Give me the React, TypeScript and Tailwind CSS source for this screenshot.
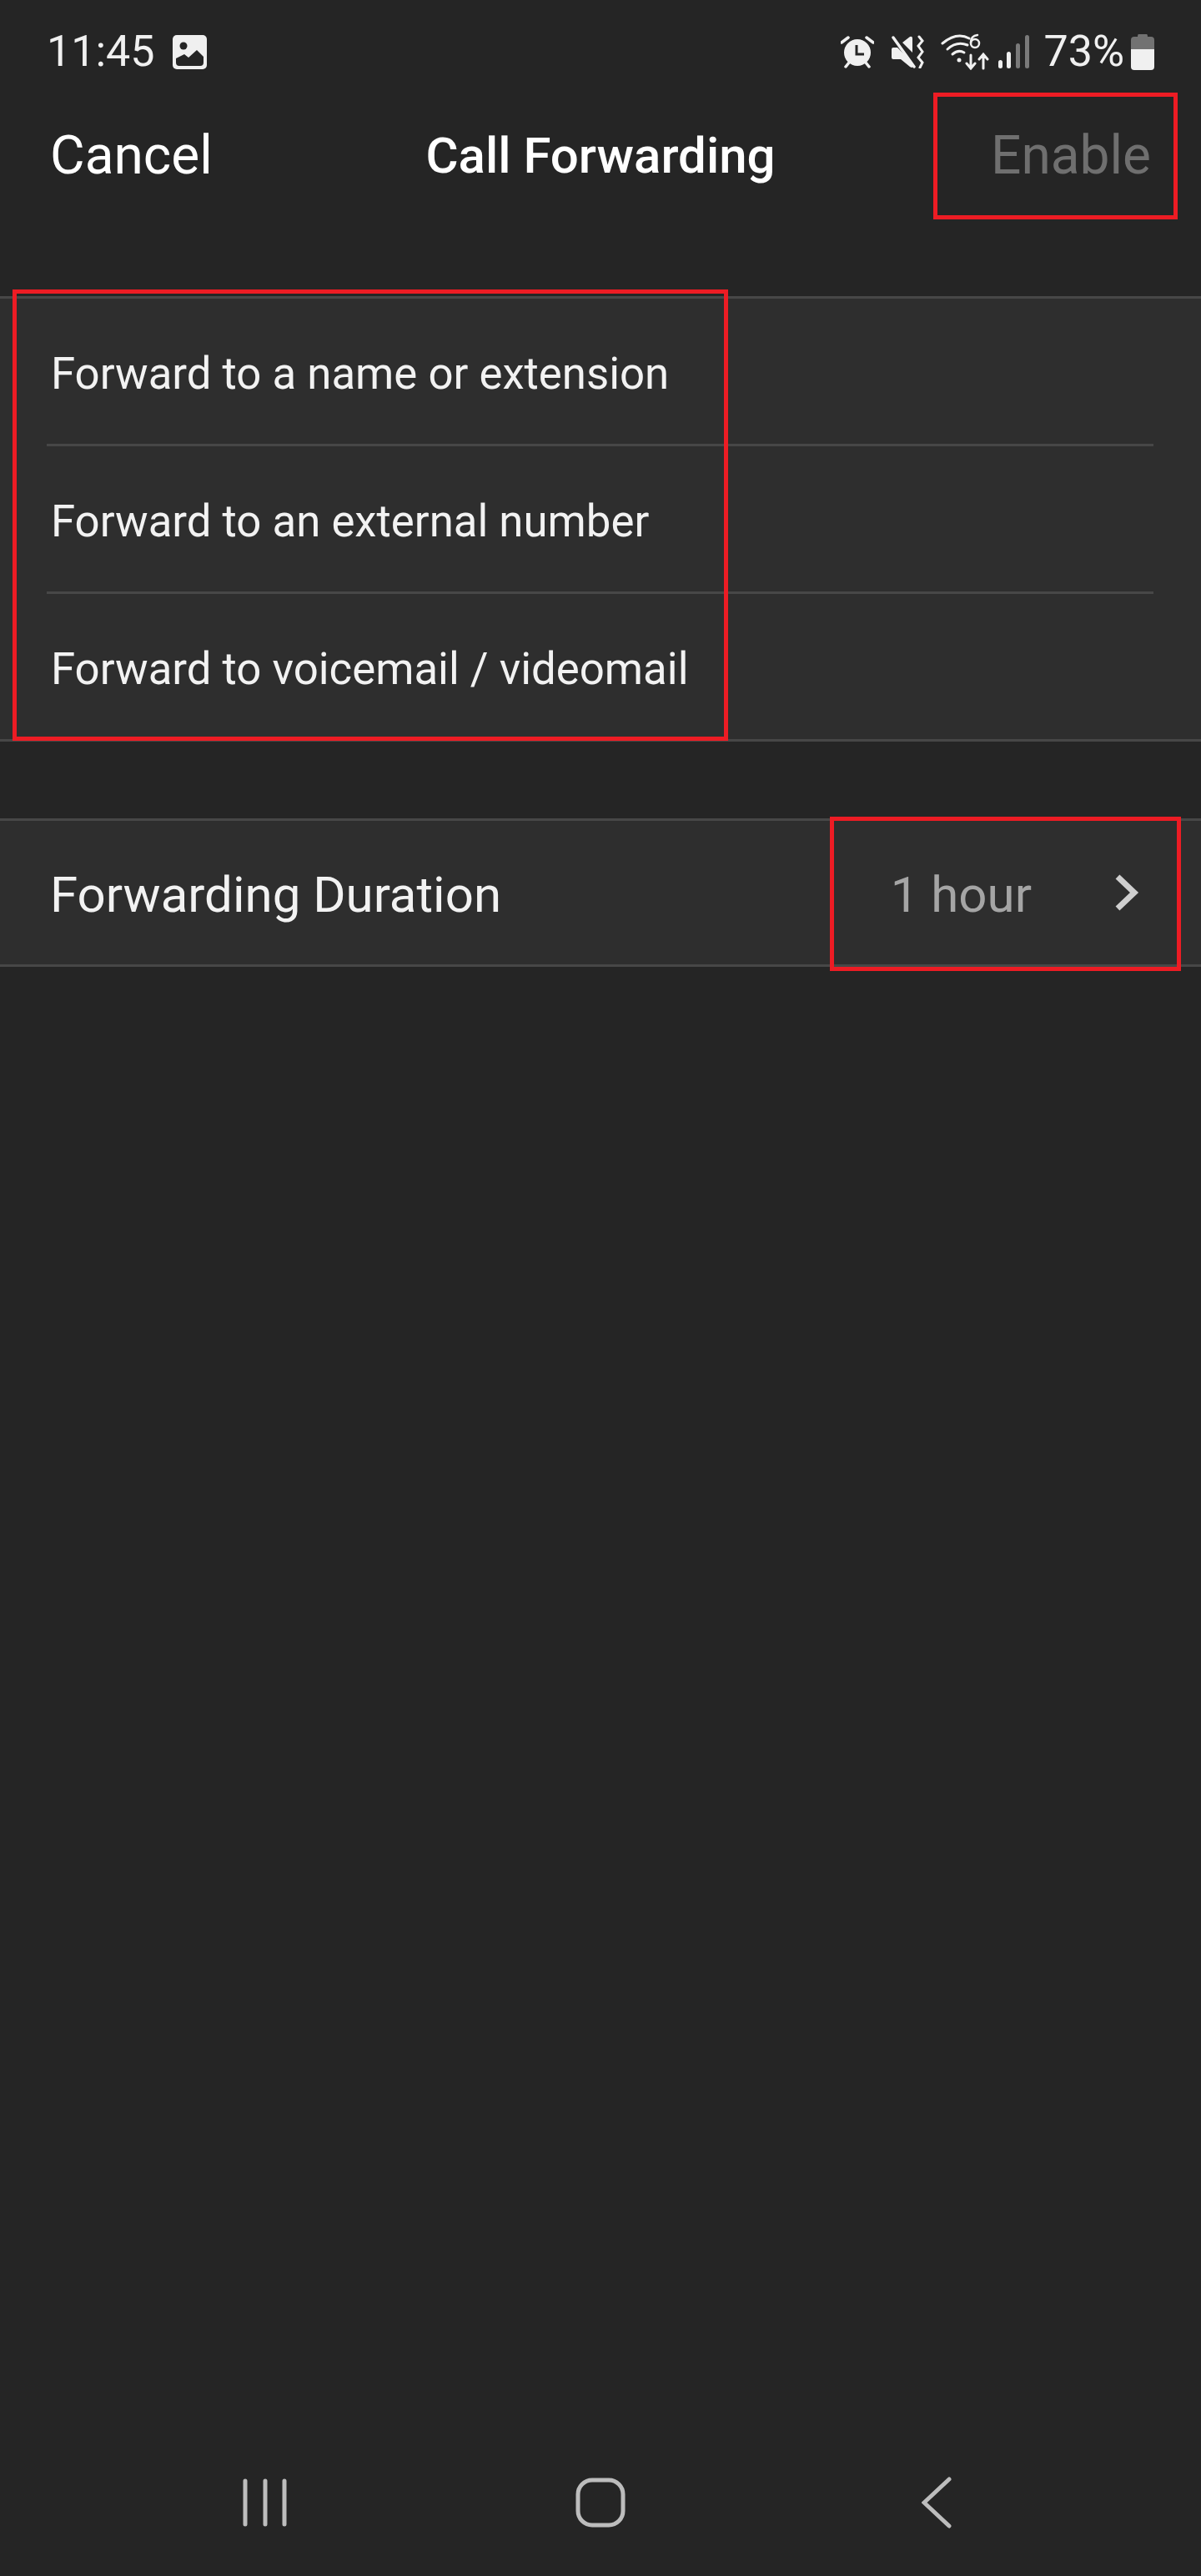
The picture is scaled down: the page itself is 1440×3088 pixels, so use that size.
const font = { fontFamily: "Roboto, sans-serif" };

function ImageIcon() {
  return (
    <svg width="41" height="41" viewBox="0 0 41 41" className="ml-[21px]">
      <rect width="41" height="41" rx="5" fill="#f0f0f0" />
      <circle cx="13" cy="13" r="4.5" fill="#252525" />
      <path
        d="M4 33 V28 L14 23 L19 27 L29 18 L37 26 V33 Q37 37 33 37 H8 Q4 37 4 33 Z"
        fill="#252525"
      />
    </svg>
  );
}

function AlarmIcon() {
  return (
    <svg width="40" height="40" viewBox="0 0 40 40">
      <circle cx="20" cy="21" r="16" fill="#f0f0f0" />
      <path d="M1 9 L9 3 M39 9 L31 3 M6 38 L10 33 M34 38 L30 33" stroke="#f0f0f0" strokeWidth="3.5" strokeLinecap="round" />
      <path d="M19 12 V23 H28" stroke="#252525" strokeWidth="3" fill="none" />
    </svg>
  );
}

function MuteIcon() {
  return (
    <svg width="40" height="40" viewBox="0 0 40 40">
      <path d="M1 17 Q1 15 3 15 H8 L26 33 V38 Q26 40 23 38 L12 29 H3 Q1 29 1 27 Z" fill="#f0f0f0" />
      <path d="M14 9 L23 2 Q26 1 26 4 V21 Z" fill="#f0f0f0" />
      <path d="M3 3 L28 38" stroke="#f0f0f0" strokeWidth="3.5" strokeLinecap="round" />
      <path d="M34 2 L38 7 L33 13 L38 20 L33 27 L38 33 L35 39" stroke="#f0f0f0" strokeWidth="3" fill="none" strokeLinecap="round" />
    </svg>
  );
}

function WifiIcon() {
  return (
    <svg width="58" height="44" viewBox="0 0 58 44" fill="none" stroke="#f0f0f0" strokeLinecap="round">
      <path d="M2 12 Q19 -2 34 6" strokeWidth="3" />
      <path d="M8 19 Q19 9 32 14" strokeWidth="3" />
      <path d="M14 25 Q21 19 28 23" strokeWidth="3" />
      <circle cx="22" cy="32" r="2.5" fill="#f0f0f0" stroke="none" />
      <circle cx="41" cy="12" r="5" strokeWidth="2.5" />
      <path d="M36 11 Q36 3 44 2" strokeWidth="2.5" />
      <path d="M36 26 V41 M31 36 L36 42 L41 36 M51 42 V26 M46 31 L51 25 L56 31" strokeWidth="3" />
    </svg>
  );
}

function SignalIcon() {
  return (
    <svg width="37" height="40" viewBox="0 0 37 40">
      <rect x="0" y="30" width="5" height="10" rx="2.5" fill="#f0f0f0" />
      <rect x="10" y="20" width="5" height="20" rx="2.5" fill="#f0f0f0" />
      <rect x="21" y="10" width="5" height="30" rx="2.5" fill="#7a7a7a" />
      <rect x="32" y="0" width="5" height="40" rx="2.5" fill="#7a7a7a" />
    </svg>
  );
}

function BatteryIcon() {
  return (
    <svg width="28" height="43" viewBox="0 0 28 43" className="ml-[8px]">
      <path d="M9 0 H19 Q20 0 20 3 H24 Q28 3 28 7 V18 H0 V7 Q0 3 4 3 H8 Q8 0 9 0 Z" fill="#727272" />
      <path d="M0 18 H28 V39 Q28 43 24 43 H4 Q0 43 0 39 Z" fill="#f0f0f0" />
    </svg>
  );
}

function StatusBar() {
  return (
    <div className="flex h-[124px] items-center pl-[56px] pr-[56px] text-[#f0f0f0]">
      <span className="text-[52px] leading-none">11:45</span>
      <ImageIcon />
      <div className="ml-auto flex items-center">
        <AlarmIcon />
        <div className="ml-[20px]"><MuteIcon /></div>
        <div className="ml-[20px]"><WifiIcon /></div>
        <div className="ml-[11px]"><SignalIcon /></div>
        <span className="ml-[17px] text-[52px] leading-none">73%</span>
        <BatteryIcon />
      </div>
    </div>
  );
}

function Row({ label }: { label: string }) {
  return (
    <div className="flex h-[174px] items-center pl-[61px] pt-[7px] text-[52.75px] leading-none text-[#f2f2f2]">
      {label}
    </div>
  );
}

export default function App() {
  return (
    <div className="relative flex h-[3088px] w-[1440px] flex-col overflow-hidden bg-[#252525]" style={font}>
      <StatusBar />

      <div className="grid h-[123px] grid-cols-[1fr_auto_1fr] items-center px-[60px] pt-[2px] text-[64px] leading-none">
        <span className="text-white">Cancel</span>
        <span className="text-[60px] font-medium text-white">Call Forwarding</span>
        <span className="text-right text-[#6f6f6f]">Enable</span>
      </div>

      <div className="mt-[108px] border-y-[3px] border-[#474747] bg-[#2e2e2e]">
        <Row label="Forward to a name or extension" />
        <div className="ml-[56px] mr-[57px] h-[3px] bg-[#474747]" />
        <Row label="Forward to an external number" />
        <div className="ml-[56px] mr-[57px] h-[3px] bg-[#474747]" />
        <Row label="Forward to voicemail / videomail" />
      </div>

      <div className="mt-[92px] flex h-[178px] items-center border-y-[3px] border-[#474747] bg-[#2e2e2e] pl-[60px] pr-[74px] text-[60px] leading-none">
        <span className="mt-[5px] text-[#f2f2f2]">Forwarding Duration</span>
        <span className="ml-auto mt-[5px] text-[#a5a5a5]">1 hour</span>
        <svg width="30" height="46" viewBox="0 0 30 46" className="ml-[99px]">
          <path d="M4 4 L24 23 L4 42" fill="none" stroke="#cfcfcf" strokeWidth="7" />
        </svg>
      </div>

      <div className="mt-auto flex h-[176px] items-center pl-[291px]">
        <svg width="53" height="58" viewBox="0 0 53 58" stroke="#bdbdbd" strokeWidth="5" strokeLinecap="round">
          <path d="M3 3 V55 M27 3 V55 M50 3 V55" />
        </svg>
        <svg width="60" height="60" viewBox="0 0 60 60" className="ml-[346px]">
          <rect x="3" y="3" width="54" height="54" rx="17" fill="none" stroke="#bdbdbd" strokeWidth="5" />
        </svg>
        <svg width="36" height="62" viewBox="0 0 36 62" className="ml-[355px]">
          <path d="M33 3 L3 31 L33 59" fill="none" stroke="#bdbdbd" strokeWidth="5" strokeLinecap="round" />
        </svg>
      </div>

      {/* red annotation boxes on top of the screenshot */}
      <div className="absolute left-[1119px] top-[111px] h-[152px] w-[293px] border-[5px] border-[#ed1c24]" />
      <div className="absolute left-[15px] top-[347px] h-[541px] w-[858px] border-[5px] border-[#ed1c24]" />
      <div className="absolute left-[995px] top-[979px] h-[185px] w-[421px] border-[5px] border-[#ed1c24]" />
    </div>
  );
}
